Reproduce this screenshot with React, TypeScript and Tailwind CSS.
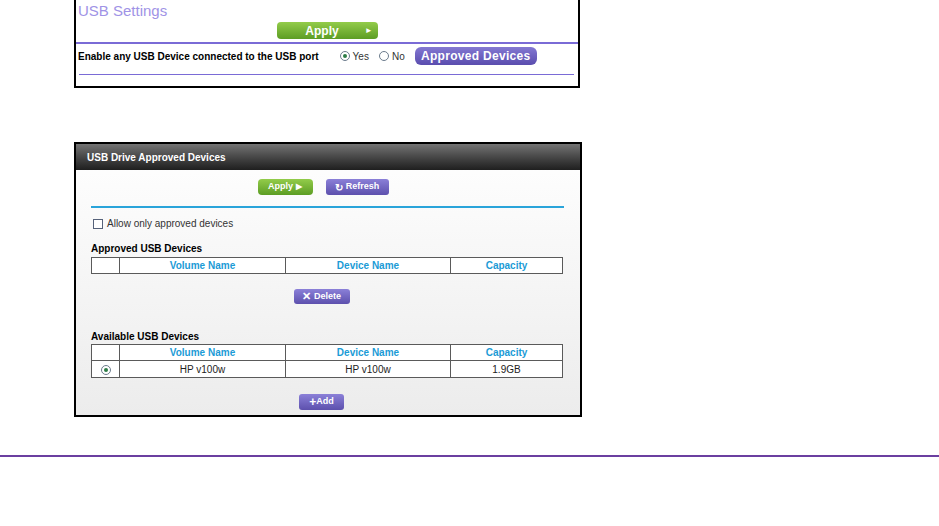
import React from "react";

// USB settings page: top settings card + approved devices dialog

const font = { fontFamily: '"Liberation Sans", Arial, sans-serif' };

const Radio = ({ checked }: { checked?: boolean }) => (
  <span className="inline-flex h-[10px] w-[10px] items-center justify-center rounded-full border border-[#6b7b8c] bg-white">
    {checked && <span className="h-[4px] w-[4px] rounded-full bg-[#2d7d46]" />}
  </span>
);

const GreenButton = ({ children, className = "" }: { children: React.ReactNode; className?: string }) => (
  <div
    className={`flex items-center justify-center rounded-[4px] bg-gradient-to-b from-[#93cc4a] to-[#5c9d23] font-bold text-white ${className}`}
  >
    {children}
  </div>
);

const PurpleButton = ({ children, className = "" }: { children: React.ReactNode; className?: string }) => (
  <div
    className={`flex items-center justify-center rounded-[3px] bg-gradient-to-b from-[#8b80d8] to-[#5d50ad] font-bold text-white ${className}`}
  >
    {children}
  </div>
);

type Row = { volume: string; device: string; capacity: string };

const DeviceTable = ({ rows }: { rows: Row[] }) => (
  <table className="w-[472px] border-collapse text-[10px]">
    <thead>
      <tr className="h-[16px]">
        <th className="w-[28px] border border-[#5a5a5a] bg-white" />
        <th className="w-[166px] border border-[#5a5a5a] bg-white font-bold text-[#1b9bd6]">Volume Name</th>
        <th className="w-[165px] border border-[#5a5a5a] bg-white font-bold text-[#1b9bd6]">Device Name</th>
        <th className="border border-[#5a5a5a] bg-white font-bold text-[#1b9bd6]">Capacity</th>
      </tr>
    </thead>
    <tbody>
      {rows.map((r) => (
        <tr key={r.volume} className="h-[17px] text-[#222]">
          <td className="border border-[#5a5a5a] bg-white text-center">
            <span className="inline-flex align-middle">
              <Radio checked />
            </span>
          </td>
          <td className="border border-[#5a5a5a] bg-white text-center">{r.volume}</td>
          <td className="border border-[#5a5a5a] bg-white text-center">{r.device}</td>
          <td className="border border-[#5a5a5a] bg-white text-center">{r.capacity}</td>
        </tr>
      ))}
    </tbody>
  </table>
);

export default function App() {
  return (
    <div className="relative h-[526px] w-[939px] overflow-hidden bg-white" style={font}>
      {/* USB Settings card */}
      <div className="ml-[74px] flex h-[88px] w-[506px] flex-col border-2 border-t-0 border-black">
        <div className="pl-[2px] pt-[2px] text-[15px] leading-[18px] text-[#a093e6]">USB Settings</div>
        <div className="mt-[2px] flex justify-center">
          <GreenButton className="h-[17px] w-[101px] gap-[26px] rounded-[3px] pl-[24px] text-[12px]">
            <span>Apply</span>
            <span className="text-[8px]">&#9658;</span>
          </GreenButton>
        </div>
        <div className="mt-[3px] h-[2px] bg-[#7a6bd6]" />
        <div className="flex h-[24px] items-center pl-[2px] text-[10px]">
          <span className="font-bold text-black">Enable any USB Device connected to the USB port</span>
          <span className="ml-[21px] flex items-center gap-[3px]">
            <Radio checked />
            <span className="text-[10px] text-[#333]">Yes</span>
          </span>
          <span className="ml-[10px] flex items-center gap-[3px]">
            <Radio />
            <span className="text-[10px] text-[#333]">No</span>
          </span>
          <div className="ml-[10px] flex h-[18px] w-[122px] items-center justify-center rounded-[6px] bg-gradient-to-b from-[#8478d2] to-[#5a4cae] text-[12px] font-bold tracking-[0.3px] text-white">
            Approved Devices
          </div>
        </div>
        <div className="ml-[3px] mr-[4px] mt-[6px] h-px bg-[#7a6bd6]" />
      </div>

      {/* USB Drive Approved Devices card */}
      <div className="ml-[74px] mt-[54px] flex h-[275px] w-[508px] flex-col border-2 border-black bg-gradient-to-b from-white to-[#ececec]">
        <div className="flex h-[26px] items-center bg-gradient-to-b from-[#747474] to-[#1f1f1f] pl-[11px] text-[10px] font-bold text-white">
          USB Drive Approved Devices
        </div>
        <div className="flex flex-col pl-[15px] pr-[17px]">
          <div className="mt-[9px] flex justify-center gap-[13px] pr-[8px]">
            <GreenButton className="h-[16px] w-[55px] gap-[3px] text-[9px]">
              <span>Apply</span>
              <span className="text-[8px]">&#9654;</span>
            </GreenButton>
            <PurpleButton className="h-[16px] w-[63px] gap-[3px] text-[9px]">
              <span className="text-[10px]">&#8635;</span>
              <span>Refresh</span>
            </PurpleButton>
          </div>
          <div className="mt-[11px] h-[2px] w-[473px] bg-[#2aa4da]" />
          <div className="mt-[8px] flex items-center gap-[4px] pl-[2px] text-[10px] text-[#333]">
            <span className="h-[10px] w-[10px] border border-[#56627a] bg-white" />
            <span>Allow only approved devices</span>
          </div>
          <div className="mt-[12px] text-[10px] font-bold leading-[12px] text-black">Approved USB Devices</div>
          <div className="mt-[2px]">
            <DeviceTable rows={[]} />
          </div>
          <div className="mt-[15px] flex justify-center pr-[11px]">
            <PurpleButton className="h-[15px] w-[56px] gap-[3px] text-[9px]">
              <span className="text-[11px] leading-none">&#10005;</span>
              <span>Delete</span>
            </PurpleButton>
          </div>
          <div className="mt-[27px] text-[10px] font-bold leading-[12px] text-black">Available USB Devices</div>
          <div className="mt-[1px]">
            <DeviceTable rows={[{ volume: "HP v100w", device: "HP v100w", capacity: "1.9GB" }]} />
          </div>
          <div className="mt-[16px] flex justify-center pr-[11px]">
            <PurpleButton className="h-[16px] w-[45px] text-[9px]">
              <span className="text-[12px] leading-none">+</span>
              <span>Add</span>
            </PurpleButton>
          </div>
        </div>
      </div>

      {/* footer rule */}
      <div className="mt-[38px] h-[2px] w-full bg-[#6b3fa0]" />
    </div>
  );
}
